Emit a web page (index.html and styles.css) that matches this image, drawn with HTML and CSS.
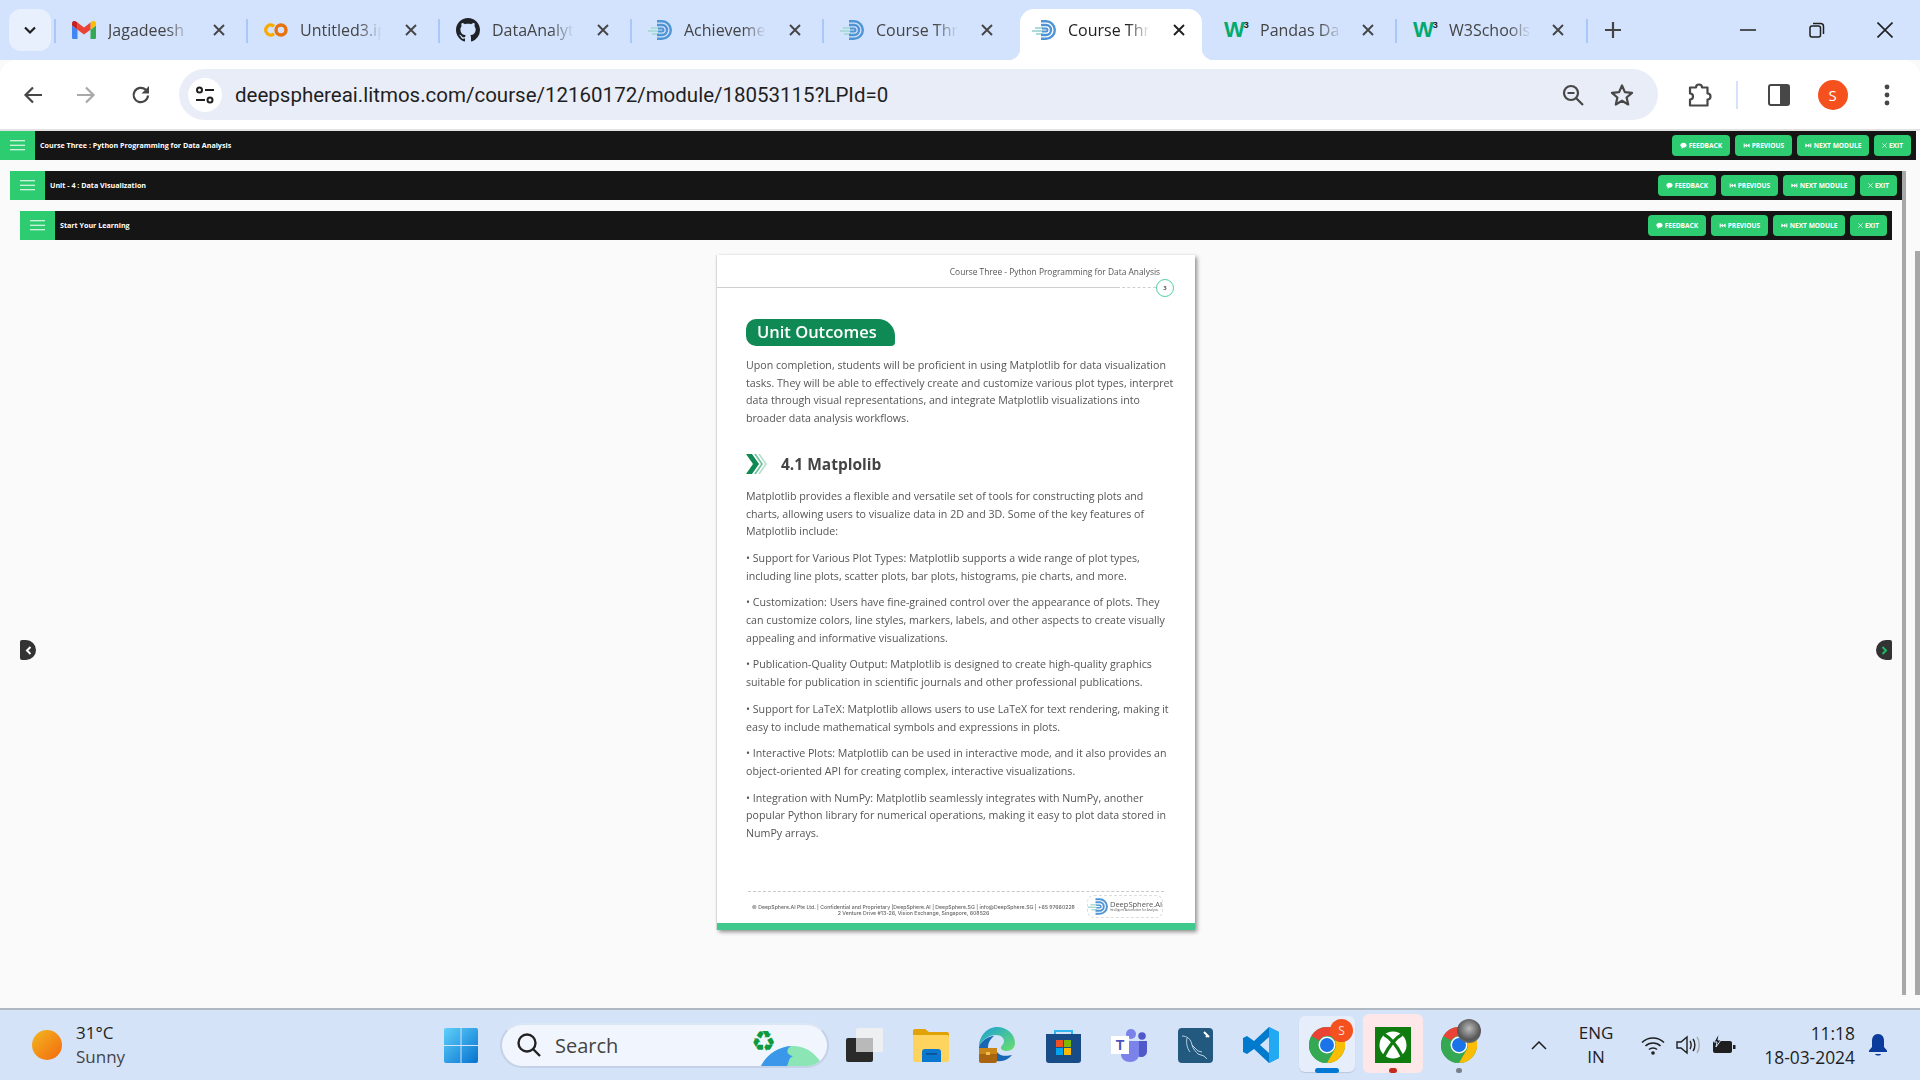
FILE: index.html
```html
<!DOCTYPE html>
<html lang="en">
<head>
    <meta charset="UTF-8">
    <title>Course Three : Python Programming for Data Analysis</title>
    <link rel="stylesheet" href="styles.css">
</head>
<body>
    <!-- shared icons -->
    <svg class="defs" width="0" height="0">
        <symbol id="ds" viewBox="0 0 24 20">
            <path d="M0 11h10M3 8h8M4 14h7" stroke="#a9dcd8" stroke-width="1.800" fill="none"/>
            <path d="M9 1.200h5a8.800 8.800 0 0 1 0 17.600H9" stroke="#4f94d4" stroke-width="2.400" fill="none"/>
            <path d="M9 5h5a5 5 0 0 1 0 10H9" stroke="#4f94d4" stroke-width="2.400" fill="none"/>
            <path d="M10 8.500h4a1.500 1.500 0 0 1 0 3h-4" stroke="#4f94d4" stroke-width="2" fill="none"/>
        </symbol>
        <symbol id="x" viewBox="0 0 12 12">
            <path d="M1 1l10 10M11 1L1 11" stroke="currentColor" stroke-width="1.900" fill="none"/>
        </symbol>
        <symbol id="menu" viewBox="0 0 15 11">
            <path d="M0 .75h15M0 5.250h15M0 9.750h15" stroke="#fff" stroke-width="1.200"/>
        </symbol>
        <symbol id="i-chat" viewBox="0 0 10 10">
            <path d="M5 1c2.500 0 4.500 1.500 4.500 3.500S7.500 8 5 8L2 9.500l.5-2.300C1.200 6.600.5 5.600.5 4.500.5 2.500 2.500 1 5 1z" fill="#fff"/>
        </symbol>
        <symbol id="i-prev" viewBox="0 0 10 10">
            <path d="M1 2h1.500v6H1zM5.500 2v6L2.500 5zM9.500 2v6l-4-3z" fill="#fff"/>
        </symbol>
        <symbol id="i-next" viewBox="0 0 10 10">
            <path d="M9 2H7.500v6H9zM4.500 2v6l3-3zM.5 2v6l4-3z" fill="#fff"/>
        </symbol>
        <symbol id="chrome" viewBox="0 0 36 36">
            <circle cx="18" cy="18" r="18" fill="#34a853"/>
            <path d="M18 0a18 18 0 0 1 15.600 9H18a9 9 0 0 0-7.800 4.500L2.400 9A18 18 0 0 1 18 0z" fill="#ea4335"/>
            <path d="M33.600 9A18 18 0 0 1 18 36l7.800-13.500A9 9 0 0 0 25.800 13.500z" fill="#fbbc04"/>
            <path d="M2.400 9l7.800 13.500A9 9 0 0 0 18 27l-3 9A18 18 0 0 1 2.400 9z" fill="#34a853"/>
            <circle cx="18" cy="18" r="8.500" fill="#fff"/>
            <circle cx="18" cy="18" r="7" fill="#1a73e8"/>
        </symbol>
    </svg>

    <!-- Tab strip -->
    <div class="tabstrip">
        <div class="tab-search">
            <svg width="14" height="9" viewBox="0 0 14 9"><path d="M2 1.500l5 5 5-5" stroke="#1f1f1f" stroke-width="2.200" fill="none"/></svg>
        </div>

        <div class="tab">
            <svg class="fav" width="24" height="18" viewBox="0 0 24 18">
                <path d="M1.600 18h3.900V8.700L0 4.600v11.800C0 17.300.7 18 1.600 18z" fill="#4285f4"/>
                <path d="M18.500 18h3.900c.9 0 1.600-.7 1.600-1.600V4.600l-5.500 4.100z" fill="#34a853"/>
                <path d="M18.500 1.600v7.100L24 4.600V2.400C24 .4 21.700-.8 20.100.4z" fill="#fbbc04"/>
                <path d="M5.500 8.700V1.600L12 6.500l6.500-4.900v7.100L12 13.600z" fill="#ea4335"/>
                <path d="M0 2.400v2.200l5.500 4.100V1.600L3.900.4C2.300-.8 0 .4 0 2.400z" fill="#c5221f"/>
            </svg>
            <span class="tab-label">Jagadeesh</span>
            <svg class="tab-x" width="12" height="12"><use href="#x"/></svg>
        </div>
        <div class="tab">
            <svg class="fav" width="24" height="14" viewBox="0 0 24 14">
                <path d="M10 3.200a5 5 0 1 0 0 7.600" stroke="#f9ab00" stroke-width="3.400" fill="none"/>
                <circle cx="17" cy="7" r="5" stroke="#e8710a" stroke-width="3.400" fill="none"/>
            </svg>
            <span class="tab-label">Untitled3.ip</span>
            <svg class="tab-x" width="12" height="12"><use href="#x"/></svg>
        </div>
        <div class="tab">
            <svg class="fav" width="24" height="24" viewBox="0 0 16 16">
                <path fill="#1f2328" d="M8 0C3.580 0 0 3.580 0 8c0 3.540 2.290 6.530 5.470 7.590.4.07.55-.17.55-.38 0-.19-.01-.82-.01-1.490-2.010.37-2.530-.49-2.690-.94-.09-.23-.48-.94-.82-1.130-.28-.15-.68-.52-.01-.53.63-.01 1.080.58 1.230.82.72 1.210 1.870.87 2.330.66.07-.52.28-.87.51-1.070-1.780-.2-3.640-.89-3.640-3.950 0-.87.31-1.590.82-2.150-.08-.2-.36-1.020.08-2.120 0 0 .67-.21 2.200.82.64-.18 1.320-.27 2-.27.68 0 1.360.09 2 .27 1.530-1.040 2.200-.82 2.200-.82.44 1.100.16 1.920.08 2.120.51.56.82 1.270.82 2.150 0 3.070-1.870 3.750-3.650 3.950.29.25.54.73.54 1.480 0 1.070-.01 1.930-.01 2.200 0 .21.15.46.55.38A8.013 8.013 0 0016 8c0-4.420-3.580-8-8-8z"/>
            </svg>
            <span class="tab-label">DataAnalyt</span>
            <svg class="tab-x" width="12" height="12"><use href="#x"/></svg>
        </div>
        <div class="tab">
            <svg class="fav" width="24" height="20"><use href="#ds"/></svg>
            <span class="tab-label">Achieveme</span>
            <svg class="tab-x" width="12" height="12"><use href="#x"/></svg>
        </div>
        <div class="tab">
            <svg class="fav" width="24" height="20"><use href="#ds"/></svg>
            <span class="tab-label">Course Thr</span>
            <svg class="tab-x" width="12" height="12"><use href="#x"/></svg>
        </div>
        <div class="tab tab-active">
            <svg class="fav" width="24" height="20"><use href="#ds"/></svg>
            <span class="tab-label">Course Thr</span>
            <svg class="tab-x" width="12" height="12"><use href="#x"/></svg>
        </div>
        <div class="tab tab-noline tab-pandas">
            <span class="fav w3">W<sup>3</sup></span>
            <span class="tab-label">Pandas Da</span>
            <svg class="tab-x" width="12" height="12"><use href="#x"/></svg>
        </div>
        <div class="tab tab-w3">
            <span class="fav w3">W<sup>3</sup></span>
            <span class="tab-label">W3Schools</span>
            <svg class="tab-x" width="12" height="12"><use href="#x"/></svg>
        </div>
        <div class="tab-new">
            <svg width="16" height="16" viewBox="0 0 16 16"><path d="M8 0v16M0 8h16" stroke="#444" stroke-width="2.200"/></svg>
        </div>

        <div class="win-controls">
            <svg width="16" height="2" viewBox="0 0 16 2"><path d="M0 1h16" stroke="#1f1f1f" stroke-width="1.500"/></svg>
            <svg width="16" height="16" viewBox="0 0 16 16" fill="none" stroke="#1f1f1f" stroke-width="1.500"><rect x="1" y="4" width="10.500" height="11" rx="2"/><path d="M4 1.500h7.500a3 3 0 0 1 3 3V12"/></svg>
            <svg width="16" height="16" viewBox="0 0 16 16"><path d="M.5.5l15 15M15.500.5l-15 15" stroke="#1f1f1f" stroke-width="1.600"/></svg>
        </div>
    </div>

    <!-- Toolbar -->
    <div class="toolbar">
        <svg class="tool-back" width="20" height="18" viewBox="0 0 20 18"><path d="M19 9H3M10 1.500L2.500 9l7.500 7.500" stroke="#474747" stroke-width="2.200" fill="none"/></svg>
        <svg class="tool-fwd" width="20" height="18" viewBox="0 0 20 18"><path d="M1 9h16M10 1.500L17.500 9 10 16.500" stroke="#a8a8a8" stroke-width="2.200" fill="none"/></svg>
        <svg class="tool-reload" width="20" height="20" viewBox="0 0 20 20"><path d="M17 10.500A7.200 7.200 0 1 1 14.800 4.800L17 7" stroke="#474747" stroke-width="2.200" fill="none"/><path d="M18 1v7.500h-7.500z" fill="#474747"/></svg>

        <div class="omnibox">
            <span class="site-info">
                <svg width="20" height="18" viewBox="0 0 20 18" fill="none" stroke="#1f1f1f" stroke-width="2"><circle cx="4.500" cy="4" r="2.500"/><path d="M10 4h9M1 14h9"/><circle cx="15" cy="14" r="2.500"/></svg>
            </span>
            <span class="url">deepsphereai.litmos.com/course/12160172/module/18053115?LPId=0</span>
            <svg class="omni-zoom" width="22" height="22" viewBox="0 0 22 22" fill="none" stroke="#474747" stroke-width="2.200"><circle cx="9" cy="9" r="7"/><path d="M14 14l7 7M5.500 9h7"/></svg>
            <svg class="omni-star" width="24" height="23" viewBox="0 0 24 23"><path d="M12 2.500l2.900 6.600 7.100.7-5.400 4.700 1.600 7L12 17.800l-6.200 3.700 1.600-7L2 9.800l7.100-.7z" fill="none" stroke="#474747" stroke-width="2.200" stroke-linejoin="round"/></svg>
        </div>

        <svg class="tool-ext" width="26" height="26" viewBox="0 0 26 26"><path d="M3 5.500h6a3 3 0 0 1 6 0h5.500v6a3 3 0 0 1 0 6v6H3v-6a3 3 0 0 0 0-6z" fill="none" stroke="#474747" stroke-width="2.200" stroke-linejoin="round"/></svg>
        <span class="tool-sep"></span>
        <svg class="tool-panel" width="22" height="22" viewBox="0 0 22 22"><rect x="1" y="1" width="20" height="20" rx="2" fill="none" stroke="#474747" stroke-width="2"/><path d="M12 1h8a1 1 0 0 1 1 1v18a1 1 0 0 1-1 1h-8z" fill="#474747"/></svg>
        <span class="avatar">S</span>
        <svg class="tool-dots" width="6" height="22" viewBox="0 0 6 22" fill="#474747"><circle cx="3" cy="3" r="2.400"/><circle cx="3" cy="11" r="2.400"/><circle cx="3" cy="19" r="2.400"/></svg>
    </div>

    <!-- Page -->
    <main class="page">
        <div class="bar">
            <span class="bar-menu"><svg width="15" height="11"><use href="#menu"/></svg></span>
            <span class="bar-title">Course Three : Python Programming for Data Analysis</span>
            <div class="bar-btns">
                <a class="btn"><svg width="7" height="7"><use href="#i-chat"/></svg>Feedback</a>
                <a class="btn"><svg width="7" height="7"><use href="#i-prev"/></svg>Previous</a>
                <a class="btn"><svg width="7" height="7"><use href="#i-next"/></svg>Next Module</a>
                <a class="btn"><svg width="5" height="5" class="btn-x"><use href="#x"/></svg>Exit</a>
            </div>
        </div>

        <div class="level level-2">
            <div class="bar">
                <span class="bar-menu"><svg width="15" height="11"><use href="#menu"/></svg></span>
                <span class="bar-title">Unit - 4 : Data Visualization</span>
                <div class="bar-btns">
                    <a class="btn"><svg width="7" height="7"><use href="#i-chat"/></svg>Feedback</a>
                    <a class="btn"><svg width="7" height="7"><use href="#i-prev"/></svg>Previous</a>
                    <a class="btn"><svg width="7" height="7"><use href="#i-next"/></svg>Next Module</a>
                    <a class="btn"><svg width="5" height="5" class="btn-x"><use href="#x"/></svg>Exit</a>
                </div>
            </div>

            <div class="level level-3">
                <div class="bar">
                    <span class="bar-menu"><svg width="15" height="11"><use href="#menu"/></svg></span>
                    <span class="bar-title">Start Your Learning</span>
                    <div class="bar-btns">
                        <a class="btn"><svg width="7" height="7"><use href="#i-chat"/></svg>Feedback</a>
                        <a class="btn"><svg width="7" height="7"><use href="#i-prev"/></svg>Previous</a>
                        <a class="btn"><svg width="7" height="7"><use href="#i-next"/></svg>Next Module</a>
                        <a class="btn"><svg width="5" height="5" class="btn-x"><use href="#x"/></svg>Exit</a>
                    </div>
                </div>

                <!-- Slide document -->
                <article class="sheet">
                    <div class="sheet-top">Course Three - Python Programming for Data Analysis</div>
                    <div class="sheet-rule">
                        <span class="rule-solid"></span>
                        <span class="rule-dash"></span>
                        <span class="page-no">3</span>
                    </div>

                    <div class="sheet-body">
                        <h2 class="badge">Unit Outcomes</h2>
                        <p class="copy copy-first">Upon completion, students will be proficient in using Matplotlib for data visualization<br>tasks. They will be able to effectively create and customize various plot types, interpret<br>data through visual representations, and integrate Matplotlib visualizations into<br>broader data analysis workflows.</p>

                        <h3 class="section">
                            <svg width="22" height="20" viewBox="0 0 22 20">
                                <path d="M0 0h6l7 10-7 10H0l7-10z" fill="#0f8a55"/>
                                <path d="M8 0h2l7 10-7 10H8l7-10z" fill="#6cc09b"/>
                                <path d="M12 0h2l7 10-7 10h-2l7-10z" fill="#b5e0cc"/>
                            </svg>
                            4.1 Matplolib
                        </h3>

                        <p class="copy">Matplotlib provides a flexible and versatile set of tools for constructing plots and<br>charts, allowing users to visualize data in 2D and 3D. Some of the key features of<br>Matplotlib include:</p>
                        <p class="copy">• Support for Various Plot Types: Matplotlib supports a wide range of plot types,<br>including line plots, scatter plots, bar plots, histograms, pie charts, and more.</p>
                        <p class="copy">• Customization: Users have fine-grained control over the appearance of plots. They<br>can customize colors, line styles, markers, labels, and other aspects to create visually<br>appealing and informative visualizations.</p>
                        <p class="copy">• Publication-Quality Output: Matplotlib is designed to create high-quality graphics<br>suitable for publication in scientific journals and other professional publications.</p>
                        <p class="copy">• Support for LaTeX: Matplotlib allows users to use LaTeX for text rendering, making it<br>easy to include mathematical symbols and expressions in plots.</p>
                        <p class="copy">• Interactive Plots: Matplotlib can be used in interactive mode, and it also provides an<br>object-oriented API for creating complex, interactive visualizations.</p>
                        <p class="copy">• Integration with NumPy: Matplotlib seamlessly integrates with NumPy, another<br>popular Python library for numerical operations, making it easy to plot data stored in<br>NumPy arrays.</p>
                    </div>

                    <footer class="sheet-foot">
                        <div class="foot-text">© DeepSphere.AI Pte Ltd. | Confidential and Proprietary |DeepSphere.AI | DeepSphere.SG | info@DeepSphere.SG | +65 97660228<br>2 Venture Drive #13-26, Vision Exchange, Singapore, 608526</div>
                        <div class="foot-logo">
                            <svg width="21" height="17"><use href="#ds"/></svg>
                            <div class="foot-brand">DeepSphere.AI<small>Intelligent Automation for Analysis</small></div>
                        </div>
                    </footer>
                    <div class="sheet-band"></div>
                </article>
            </div>
        </div>

        <span class="scroll scroll-inner"></span>
        <span class="scroll scroll-outer"></span>
        <span class="nav-arrow nav-left"><svg width="7" height="9" viewBox="0 0 7 9"><path d="M5.500 1L2 4.500 5.500 8" stroke="#fff" stroke-width="2" fill="none"/></svg></span>
        <span class="nav-arrow nav-right"><svg width="7" height="9" viewBox="0 0 7 9"><path d="M1.500 1L5 4.500 1.500 8" stroke="#1fb964" stroke-width="2" fill="none"/></svg></span>
    </main>

    <!-- Windows taskbar -->
    <footer class="taskbar">
        <div class="weather">
            <span class="sun"></span>
            <div class="weather-text">
                <div class="temp">31°C</div>
                <div class="cond">Sunny</div>
            </div>
        </div>

        <div class="dock">
            <svg class="win-logo" width="34" height="35" viewBox="0 0 34 35">
                <defs><linearGradient id="win" x1="0" y1="0" x2="1" y2="1"><stop offset="0" stop-color="#5fd0fb"/><stop offset="1" stop-color="#0672cf"/></linearGradient></defs>
                <path d="M0 2a2 2 0 0 1 2-2h14.500v17H0zM17.500 0H32a2 2 0 0 1 2 2v15H17.500zM0 18h16.500v17H2a2 2 0 0 1-2-2zM17.500 18H34v15a2 2 0 0 1-2 2H17.500z" fill="url(#win)"/>
            </svg>

            <div class="search">
                <svg width="26" height="26" viewBox="0 0 26 26" fill="none" stroke="#222" stroke-width="2.400"><circle cx="11" cy="11" r="8.500"/><path d="M17 17l7 7"/></svg>
                <span class="search-text">Search</span>
                <span class="recycle">♻</span>
                <svg class="globe" width="62" height="20" viewBox="0 0 62 20">
                    <path d="M0 20C6 8 18 1 30 0c14-1 26 8 32 20z" fill="#8be5b4"/>
                    <path d="M0 20C6 8 18 1 30 0c-6 4-4 9 2 10-5 2-4 7-6 10z" fill="#3a97ea"/>
                </svg>
            </div>

            <span class="slot">
                <svg width="38" height="34" viewBox="0 0 38 34">
                    <rect x="0" y="10" width="27" height="24" rx="2" fill="#2a2a2a"/>
                    <rect x="10" y="0" width="27" height="24" rx="2" fill="#efefef" opacity=".9"/>
                    <rect x="10" y="10" width="17" height="14" fill="#b9b9b9"/>
                </svg>
            </span>
            <span class="slot">
                <svg width="36" height="33" viewBox="0 0 36 33">
                    <path d="M0 2a2 2 0 0 1 2-2h10l4 3h18a2 2 0 0 1 2 2v4H0z" fill="#e0a206"/>
                    <path d="M0 6h34a2 2 0 0 1 2 2v23a2 2 0 0 1-2 2H2a2 2 0 0 1-2-2z" fill="#ffd45e"/>
                    <path d="M9 33V23a3 3 0 0 1 3-3h13a3 3 0 0 1 3 3v10z" fill="#0a78cf"/>
                    <path d="M13 25h11" stroke="#0a4f94" stroke-width="1.600"/>
                </svg>
            </span>
            <span class="slot">
                <svg width="36" height="36" viewBox="0 0 36 36">
                    <defs><linearGradient id="edge" x1="0" y1="0" x2="1" y2="1"><stop offset="0" stop-color="#1a9fd9"/><stop offset="1" stop-color="#6be06a"/></linearGradient></defs>
                    <path d="M18 0c10 0 18 7 18 16 0 5-4 8-8 8-3 0-6-1-6-3 0-3 3-3 3-7 0-3-3-6-8-6C9 8 2 14 0 20 0 9 8 0 18 0z" fill="url(#edge)"/>
                    <path d="M0 20c2-6 9-11 15-11-4 3-6 7-6 11v6H0z" fill="#1767b4"/>
                    <path d="M14 33c8 3 15 0 19-5-4 1-12 2-15-3l-4 3z" fill="#1767b4"/>
                    <rect x="0" y="21" width="18" height="15" rx="2" fill="#a9650f"/>
                    <rect x="0" y="21" width="18" height="6" fill="#c88519"/>
                    <rect x="7" y="25" width="4" height="3" fill="#f0c04a"/>
                </svg>
            </span>
            <span class="slot">
                <svg width="35" height="35" viewBox="0 0 35 35">
                    <path d="M9 8V3h17v5" fill="none" stroke="#2db7ee" stroke-width="2"/>
                    <path d="M0 6h35v26a3 3 0 0 1-3 3H3a3 3 0 0 1-3-3z" fill="#174c86"/>
                    <rect x="10" y="12" width="7" height="7" fill="#f25022"/>
                    <rect x="18" y="12" width="7" height="7" fill="#7fba00"/>
                    <rect x="10" y="20" width="7" height="7" fill="#00a4ef"/>
                    <rect x="18" y="20" width="7" height="7" fill="#ffb900"/>
                </svg>
            </span>
            <span class="slot">
                <span class="teams">
                    <svg width="36" height="33" viewBox="0 0 36 33">
                        <circle cx="20" cy="5" r="5" fill="#7b83eb"/>
                        <circle cx="31" cy="7" r="3.800" fill="#5059c9"/>
                        <path d="M26 12h10v10c0 4-3 6-6 6s-4-1-4-1z" fill="#5059c9"/>
                        <path d="M10 12h18v13c0 5-4 8-9 8s-9-3-9-8z" fill="#7b83eb"/>
                    </svg>
                    <b class="teams-t">T</b>
                </span>
            </span>
            <span class="slot">
                <svg width="35" height="35" viewBox="0 0 35 35">
                    <rect width="35" height="35" rx="4" fill="#23587f"/>
                    <path d="M4 8c5 0 9 3 10 9 1 4 4 7 6 9l6 2 3 3M9 10c-1 5 0 10 3 14M14 17l6 6 4 1" fill="none" stroke="#b9d2e2" stroke-width="1"/>
                    <path d="M26 4l5 5M28 9l2-2" stroke="#fff" stroke-width="2" fill="none"/>
                </svg>
            </span>
            <span class="slot">
                <svg width="36" height="36" viewBox="0 0 36 36">
                    <path d="M26 0l10 5v26l-10 5-15-14-7 5-4-2V11l4-2 7 5zM26 10l-9 8 9 8z" fill="#007acc" fill-rule="evenodd"/>
                    <path d="M26 0l10 5v26l-10 5z" fill="#23a9f2"/>
                </svg>
            </span>
            <span class="slot slot-chrome">
                <svg width="36" height="36"><use href="#chrome"/></svg>
                <i class="mini-badge">S</i>
                <i class="run-line"></i>
            </span>
            <span class="slot slot-xbox">
                <svg width="36" height="36" viewBox="0 0 36 36">
                    <rect width="36" height="36" fill="#107c10"/>
                    <circle cx="18" cy="18" r="13.500" fill="#fff"/>
                    <path d="M9 7.500C16 11 23 21 27.500 30M27 7.500C20 11 13 21 8.500 30" fill="none" stroke="#107c10" stroke-width="3.200"/>
                </svg>
                <i class="run-dot"></i>
            </span>
            <span class="slot slot-chrome2">
                <svg width="36" height="36"><use href="#chrome"/></svg>
                <i class="mini-photo"></i>
                <i class="run-grey"></i>
            </span>
        </div>

        <div class="tray">
            <svg class="tray-up" width="16" height="9" viewBox="0 0 16 9"><path d="M1 8l7-7 7 7" stroke="#1f1f1f" stroke-width="1.500" fill="none"/></svg>
            <div class="lang">ENG<br>IN</div>
            <svg class="tray-wifi" width="24" height="19" viewBox="0 0 24 19" fill="none" stroke="#1f1f1f" stroke-width="1.500"><path d="M1 6.500c6-6 16-6 22 0M4.500 10c4-4 11-4 15 0M8 13.500c2-2 6-2 8 0"/><circle cx="12" cy="17" r="1.800" fill="#1f1f1f" stroke="none"/></svg>
            <svg class="tray-vol" width="24" height="20" viewBox="0 0 24 20" fill="none" stroke="#1f1f1f" stroke-width="1.400"><path d="M1 7h4l6-5v16l-6-5H1zM14 6c1.500 2 1.500 6 0 8M17 4c2.500 3 2.500 9 0 12"/><path d="M21 2c3 4 3 12 0 16" stroke="#aaa"/></svg>
            <svg class="tray-bat" width="24" height="20" viewBox="0 0 24 20"><rect x="1" y="6" width="19" height="12" rx="2" fill="#1f1f1f"/><path d="M21 10h2.500v4H21z" fill="#1f1f1f"/><path d="M6 0L2 7h3L4 12l5-7H6l1-5z" fill="#1f1f1f" stroke="#d4e3f8"/></svg>
            <div class="clock">11:18<br>18-03-2024</div>
            <svg class="tray-bell" width="20" height="24" viewBox="0 0 20 24"><path d="M10 1c4 0 6 3 6 7v6l3 3.500V19H1v-1.500L4 14V8c0-4 2-7 6-7z" fill="#0b3c9c"/><path d="M7 21h6c-.5 2-5 2-6 0z" fill="#0b3c9c"/></svg>
        </div>
    </footer>
</body>
</html>
```

FILE: styles.css
```css
* { box-sizing: border-box; }
html, body { margin: 0; height: 100%; }
body { width: 1920px; height: 1080px; overflow: hidden; display: flex; flex-direction: column; font-family: "Open Sans", sans-serif; background: #fafafa; }
.defs { position: absolute; }

/* tab strip */
.tabstrip { height: 60px; flex: none; background: #d3e3fd; display: flex; align-items: flex-start; padding-top: 9px; padding-left: 9px; }
.tab-search { width: 42px; height: 42px; margin-right: 4px; background: #e9f0fd; border-radius: 12px; display: flex; align-items: center; justify-content: center; }
.tab { position: relative; width: 192px; height: 51px; padding: 0 0 9px 17px; display: flex; align-items: center; color: #444; }
.tab::before { content: ""; position: absolute; left: -1px; top: 10px; width: 2px; height: 24px; background: #a8c7fa; }
.tab:first-of-type::before, .tab-active::before, .tab-noline::before { display: none; }
.tab-active { background: #fff; border-radius: 14px 14px 0 0; margin: 0 5px; width: 182px; padding-left: 12px; color: #1f1f1f; }
.tab-active::after { content: ""; position: absolute; left: -12px; right: -12px; bottom: 0; height: 12px; background:
    radial-gradient(circle at 0 0, #d3e3fd 12px, #fff 12.500px) left bottom / 12px 12px no-repeat,
    radial-gradient(circle at 100% 0, #d3e3fd 12px, #fff 12.500px) right bottom / 12px 12px no-repeat; }
.fav { width: 24px; flex: none; }
.tab-label { width: 82px; margin-left: 12px; font-size: 16px; white-space: nowrap; overflow: hidden; -webkit-mask-image: linear-gradient(to right, #000 72%, transparent); mask-image: linear-gradient(to right, #000 72%, transparent); }
.tab-x { margin-left: 23px; flex: none; color: #444; }
.tab-active .tab-x { color: #1f1f1f; }
.tab-pandas { width: 189px; }
.tab-pandas .tab-x { margin-left: 20px; }
.tab-w3 { width: 191px; padding-left: 17px; }
.tab-w3 .tab-x { margin-left: 21px; }
.w3 { font-family: "Liberation Sans", sans-serif; font-weight: bold; font-size: 22px; line-height: 24px; color: #04aa6d; letter-spacing: -1px; white-space: nowrap; }
.w3 sup { font-size: 9px; color: #222; vertical-align: 9px; line-height: 0; letter-spacing: 0; }
.tab-new { position: relative; width: 52px; height: 42px; display: flex; align-items: center; justify-content: center; }
.tab-new::before { content: ""; position: absolute; left: -1px; top: 10px; width: 2px; height: 24px; background: #a8c7fa; }
.win-controls { margin-left: auto; width: 180px; height: 42px; padding: 0 27px 0 0; display: flex; align-items: center; justify-content: space-between; }

/* toolbar */
.toolbar { height: 71px; flex: none; background: #fff; border-radius: 16px 16px 0 0; border-bottom: 2px solid #e3e3e3; padding: 9px 0 9px 23px; display: flex; align-items: center; }
.tool-fwd { margin-left: 33px; }
.tool-reload { margin-left: 35px; }
.omnibox { width: 1479px; height: 51px; margin-left: 28px; background: #e9edf7; border-radius: 26px; display: flex; align-items: center; padding-left: 9px; }
.site-info { width: 34px; height: 34px; border-radius: 50%; background: #fff; display: flex; align-items: center; justify-content: center; flex: none; }
.url { margin-left: 13px; font-family: Roboto, sans-serif; font-size: 20.500px; color: #1f1f1f; white-space: nowrap; }
.omni-zoom { margin-left: auto; }
.omni-star { margin-left: 26px; margin-right: 24px; }
.tool-ext { margin-left: 28.500px; }
.tool-sep { width: 2px; height: 28px; background: #d3e3fd; margin-left: 23.500px; }
.tool-panel { margin-left: 30px; }
.avatar { width: 30px; height: 30px; margin-left: 27.500px; border-radius: 50%; background: #f4511e; color: #fff; font-size: 15px; display: flex; align-items: center; justify-content: center; }
.tool-dots { margin-left: 36px; }

/* page */
.page { position: relative; flex: 1; min-height: 0; overflow: hidden; padding: 0 4px 0 0; background: #fafafa; }
.level { padding-top: 11px; }
.level-2 { padding-left: 10px; padding-right: 14px; }
.level-3 { padding-left: 10px; padding-right: 10px; }
.bar { height: 29px; background: #151515; display: flex; align-items: center; color: #fff; }
.bar-menu { width: 35px; height: 29px; background: #2ecc71; display: flex; align-items: center; justify-content: center; flex: none; }
.bar-title { margin-left: 5px; font-size: 7.150px; font-weight: 700; position: relative; top: -1px; }
.bar-btns { margin-left: auto; padding-right: 5px; display: flex; gap: 5px; }
.btn { height: 21px; padding: 0 8px; background: #2ecc71; border-radius: 4px; color: #fff; font-size: 6.600px; font-weight: 700; text-transform: uppercase; display: flex; align-items: center; gap: 1.500px; white-space: nowrap; }
.btn-x { color: #fff; }

/* sheet */
.sheet { position: relative; width: 478px; height: 675px; margin: 15px auto 0; background: #fff; box-shadow: 2px 2px 4px #8f8f8f, -1px 0 1px #e4e4e4; color: #555; filter: blur(.3px); }
.sheet-top { height: 32px; padding: 11px 35px 0 0; text-align: right; font-size: 8.400px; line-height: 12px; color: #555; white-space: nowrap; }
.sheet-rule { display: flex; align-items: center; height: 1px; padding-right: 21px; }
.rule-solid { flex: 1; height: 1px; background: #cfcfcf; }
.rule-dash { width: 39px; border-top: 1px dashed #cfcfcf; }
.page-no { width: 18px; height: 18px; flex: none; border: 1px solid #4fd1a5; border-radius: 50%; background: #fff; font-size: 6px; font-weight: 700; color: #555; display: flex; align-items: center; justify-content: center; }
.sheet-body { padding: 31px 0 0 29px; }
.badge { display: inline-block; width: 149px; height: 27px; margin: 0; padding-left: 11px; background: #0f8a55; color: #fff; font-size: 16.500px; font-weight: 600; line-height: 26px; border-radius: 10px 17px 4px 10px; white-space: nowrap; }
.copy { margin: 0 0 9px; font-size: 10.650px; line-height: 17.700px; color: #555; white-space: nowrap; }
.copy-first { margin-top: 11px; }
.section { display: flex; align-items: center; gap: 13px; height: 22px; margin: 25px 0 13px; font-size: 15.500px; font-weight: 700; color: #444; }
.sheet-foot { position: absolute; left: 31px; right: 31px; bottom: 9px; height: 30px; border-top: 1px dashed #c8c8c8; display: flex; align-items: center; }
.foot-text { flex: 1; padding: 7px 8px 0 0; text-align: center; font-family: Inter, sans-serif; font-size: 5.200px; font-weight: 500; line-height: 6.200px; color: #666; white-space: nowrap; }
.foot-logo { width: 76px; height: 23px; border: 1px dashed #ddd; border-radius: 7px; display: flex; align-items: center; justify-content: center; gap: 2px; flex: none; margin-right: 1px; }
.foot-brand { font-size: 7.500px; line-height: 7px; color: #555; white-space: nowrap; }
.foot-brand small { display: block; font-size: 3px; line-height: 4px; }
.sheet-band { position: absolute; left: 0; right: 0; bottom: 0; height: 7px; background: #3fc98c; }

.scroll { position: absolute; right: 14px; top: 40px; width: 4px; height: 824px; background: #a8a8a8; }
.scroll-outer { right: 0; top: 120px; width: 5px; height: 744px; }
.nav-arrow { position: absolute; top: 509px; width: 16px; height: 20px; background: #333; display: flex; align-items: center; justify-content: center; }
.nav-left { left: 20px; border-radius: 2px 10px 10px 2px; }
.nav-right { right: 28px; border-radius: 10px 2px 2px 10px; }

/* taskbar */
.taskbar { position: relative; height: 72px; flex: none; background: #d4e3f8; border-top: 2px solid #b0b8c4; display: flex; align-items: center; color: #1f1f1f; }
.weather { width: 444px; padding-left: 32px; display: flex; align-items: center; flex: none; }
.sun { width: 30px; height: 30px; border-radius: 50%; background: linear-gradient(135deg, #f2b71f, #f4690f); }
.weather-text { margin-left: 14px; font-size: 17px; line-height: 24px; }
.cond { color: #444; }
.dock { display: flex; align-items: center; height: 70px; }
.win-logo { flex: none; }
.search { position: relative; width: 329px; height: 45px; margin-left: 22px; margin-right: 3px; padding-left: 14px; background: #f1f6fe; border: 2px solid #c3d2e6; border-top-color: #dbe6f5; border-radius: 23px; display: flex; align-items: center; overflow: hidden; }
.search-text { margin-left: 13px; font-size: 20px; color: #444; }
.recycle { position: absolute; left: 249px; top: 0; font-family: "DejaVu Sans", sans-serif; font-size: 28px; line-height: 34px; color: #0c9a3c; }
.globe { position: absolute; right: 4px; bottom: 0; }
.slot { position: relative; width: 66px; height: 70px; display: flex; align-items: center; justify-content: center; flex: none; }
.teams { position: relative; display: block; width: 36px; height: 33px; }
.teams-t { position: absolute; left: 0; top: 7px; width: 18px; height: 18px; background: #fff; color: #4b53bc; font-family: "Liberation Sans", sans-serif; font-size: 14px; line-height: 18px; text-align: center; }
.slot-chrome::before { content: ""; position: absolute; left: 5px; top: 6px; width: 56px; height: 56px; background: #e6eefb; border-radius: 6px; box-shadow: 0 1px 1px #b9c7dc; z-index: 0; }
.slot-chrome svg, .slot-xbox svg { position: relative; }
.mini-badge { position: absolute; left: 36px; top: 9px; width: 23px; height: 23px; border-radius: 50%; background: #f4511e; color: #fdd; font-style: normal; font-size: 12px; line-height: 23px; text-align: center; }
.run-line { position: absolute; left: 21px; top: 58px; width: 24px; height: 5px; border-radius: 3px; background: #0078d4; }
.slot-xbox::before { content: ""; position: absolute; left: 3px; top: 4px; width: 60px; height: 59px; background: #fde7e9; border-radius: 6px; }
.run-dot { position: absolute; left: 29px; top: 58px; width: 8px; height: 5px; border-radius: 3px; background: #c42b1c; }
.mini-photo { position: absolute; left: 31px; top: 9px; width: 24px; height: 24px; border-radius: 50%; background: radial-gradient(circle at 50% 40%, #bbb, #555 60%, #888); }
.run-grey { position: absolute; left: 30px; top: 58px; width: 6px; height: 5px; border-radius: 3px; background: #7a8088; }
.tray { position: absolute; left: 1531px; top: 0; right: 0; height: 70px; display: flex; align-items: center; }
.lang { width: 50px; margin-left: 24px; text-align: center; font-size: 17px; line-height: 24px; }
.tray-wifi { margin-left: 20px; }
.tray-vol { margin-left: 11px; }
.tray-bat { margin-left: 11.500px; }
.clock { width: 110px; margin-left: 9.500px; text-align: right; font-size: 17.400px; line-height: 24px; white-space: nowrap; }
.tray-bell { margin-left: 13px; }
```
